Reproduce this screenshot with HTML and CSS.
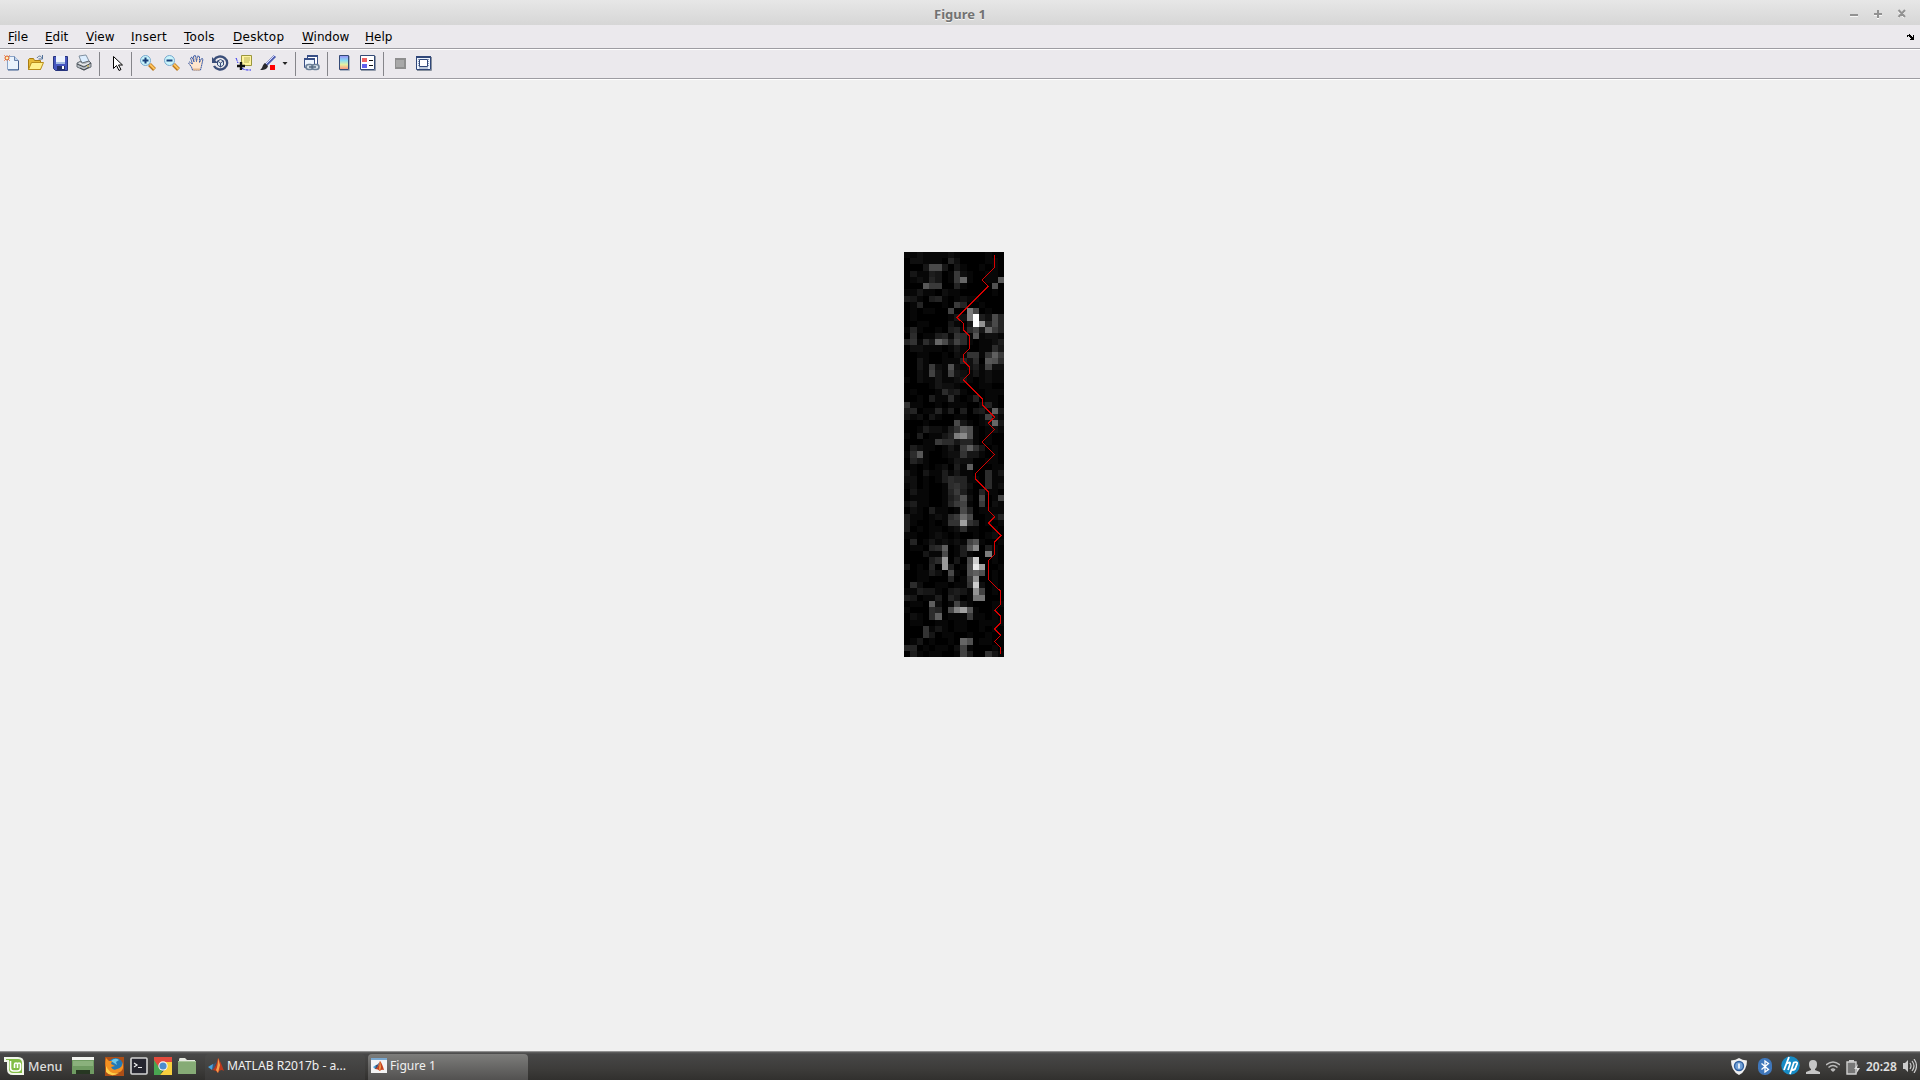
FILE: index.html
```html
<!DOCTYPE html>
<html lang="en">
<head>
<meta charset="utf-8">
<title>Figure 1</title>
<link rel="stylesheet" href="styles.css">
</head>
<body>
<div class="screen">
  <header class="titlebar">
    <span class="title">Figure 1</span>
    <svg class="window-buttons" width="60" height="16" viewBox="0 0 60 16">
      <g stroke="#fff" stroke-width="2" fill="none"><path d="M4 10.800h8M28 9.800h8M32 6v8M52.500 6l6 6.600M58.500 6l-6 6.600"/></g>
      <g stroke="#929292" stroke-width="2" fill="none"><path d="M4 10h8M28 9h8M32 5v8M52.500 5l6.500 7M59 5l-6.500 7"/></g>
    </svg>
  </header>
  <nav class="menubar">
    <span class="item"><u>F</u>ile</span>
    <span class="item"><u>E</u>dit</span>
    <span class="item"><u>V</u>iew</span>
    <span class="item wide"><u>I</u>nsert</span>
    <span class="item wide"><u>T</u>ools</span>
    <span class="item wide"><u>D</u>esktop</span>
    <span class="item"><u>W</u>indow</span>
    <span class="item"><u>H</u>elp</span>
    <svg class="dock" width="8" height="7" viewBox="0 0 8 7" shape-rendering="crispEdges"><path d="M0 1h2v-1h1v1h1v1h1v1h1V1h1v5H3V5h1V4H3V3H2V2H1v1H0z"/></svg>
  </nav>
  <div class="toolbar">
    <svg class="icon" viewBox="0 0 16 16"><path d="M3.500 1.500h7l4 4v9h-11z" fill="#e9f2fc" stroke="#8aa3c8"/><path d="M10.500 1.500v4h4" fill="#bdd3ed" stroke="#6980a8"/><path d="M14.500 6v9H4" fill="none" stroke="#3d5c8d"/><path d="M0 0l6 6M6 0L0 6" stroke="#ee986f"/><circle cx="3" cy="3" r="2" fill="#fff0b0" stroke="#dc5728"/></svg>
    <svg class="icon" viewBox="0 0 16 16"><path d="M.5 14.500v-10l1-1h4l1 2h6v9z" fill="#e6b936" stroke="#a97c12"/><path d="M.5 14.500l3-7h12l-3 7z" fill="#fff08c" stroke="#b98d1b"/><path d="M9 3c2-3 4-2 5 0M14.500 0v4h-4" fill="none" stroke="#527199"/></svg>
    <svg class="icon" viewBox="0 0 16 16"><path d="M1.500 1.500h14v14h-12l-2-2z" fill="#4656bf" stroke="#26347d"/><path d="M4 1h9v7H4z" fill="#edf2fc"/><path d="M4 7h9v2H4z" fill="#a5bde4"/><path d="M5 11h8v4H5z" fill="#24306c"/><path d="M10 11h2v3h-2z" fill="#fff"/></svg>
    <svg class="icon" viewBox="0 0 16 16"><path d="M3 1l7-1 3 6-7 3z" fill="#dceeff" stroke="#81909f"/><path d="M1 8l4-2 1 2 7-2 2 2v4l-7 3-7-3z" fill="#b8bec4" stroke="#646d75"/><path d="M1 9l7 3 7-4M4 13l4 2 5-3" fill="none" stroke="#454b51"/><path d="M3 8l5 2 5-2" stroke="#f5f5f5" fill="none"/><path d="M11 11h2" stroke="#d9b92e"/></svg>
    <i class="sep"></i>
    <svg class="icon" viewBox="0 0 16 16"><path d="M5.500 1.500v12l3-3 2.500 5 2-1-2.500-4.500h4z" fill="#fff" stroke="#000"/></svg>
    <i class="sep"></i>
    <svg class="icon" viewBox="0 0 16 16"><path d="M9.500 9.500l5 5" stroke="#b87519" stroke-width="4"/><path d="M10 9.500l4.500 4.500" stroke="#ffc45d" stroke-width="2"/><circle cx="5.500" cy="5.500" r="5" fill="#c9f4fb" stroke="#78a9cf"/><path d="M2.500 5.500h6M5.500 2.500v6" stroke="#173e7a" stroke-width="2"/></svg>
    <svg class="icon" viewBox="0 0 16 16"><path d="M9.500 9.500l5 5" stroke="#b87519" stroke-width="4"/><path d="M10 9.500l4.500 4.500" stroke="#ffc45d" stroke-width="2"/><circle cx="5.500" cy="5.500" r="5" fill="#c9f4fb" stroke="#78a9cf"/><path d="M2.500 5.500h6" stroke="#173e7a" stroke-width="2"/></svg>
    <svg class="icon" viewBox="0 0 16 16"><path d="M4.500 15l-1-3-3-4 1-1 3 2-2-6 1.500-1 2 5-.500-6 2-.500 1 6 1-5.500 2 .500v6l2-4 1.500.500-1.500 7-1 4z" fill="#ffe6cd" stroke="#3458a8" stroke-dasharray="1.800 .4"/><path d="M5 14.500h7" stroke="#e3b78d" stroke-width="2"/></svg>
    <svg class="icon" viewBox="0 0 16 16"><path d="M2 5a7 6.500 0 1 1 0 6" fill="none" stroke="#3a4e79" stroke-width="2.300"/><path d="M0 2v6h6z" fill="#3a4e79"/><path d="M5.500 6l3-1.500 3 1.500v4l-3 2-3-2zM5.500 6l3 2 3-2M8.500 8v4" fill="#dcecf4" stroke="#3a4e79"/></svg>
    <svg class="icon" viewBox="0 0 16 16"><path d="M5.500.5h10v10h-10z" fill="#fff49f" stroke="#9a963e"/><path d="M8 3h6M8 5h6M8 7h5" stroke="#b9b25a"/><path d="M0 3c1 2 1 3 2 5M6 13c2 2 4 2 9 2" fill="none" stroke="#2020ef" stroke-dasharray="3 1"/><path d="M1 11h8M5 7v8" stroke="#111" stroke-width="2.400"/></svg>
    <svg class="icon" viewBox="0 0 16 16"><path d="M15 1L6 10" stroke="#4f5fae" stroke-width="3"/><path d="M15 0L6 9" stroke="#d8dcff"/><path d="M5 8l3 3c-1 4-5 4-8 4 3-2 2-5 5-7z" fill="#29292d"/><path d="M10 10h5v5h-5z" fill="#f00"/></svg>
    <svg class="arrow" viewBox="0 0 12 16"><path d="M3.500 7h5L6 10z" fill="#222"/></svg>
    <i class="sep"></i>
    <svg class="icon" viewBox="0 0 16 16"><path d="M3.500.5h10v9h-10z" fill="#fff" stroke="#384f86"/><path d="M3 1h11" stroke="#384f86" stroke-width="2"/><path d="M.5 3.500h10v9H.5z" fill="#edf5ff" stroke="#384f86"/><path d="M0 4h11" stroke="#384f86" stroke-width="2"/><g fill="#d5e0ea" stroke="#6b8098" stroke-width="1.600"><rect x="2" y="9.500" width="7" height="5" rx="2.500"/><rect x="8" y="9.500" width="7" height="5" rx="2.500"/></g><path d="M5 12h7" stroke="#52677f" stroke-width="1.500"/></svg>
    <i class="sep"></i>
    <svg class="icon" viewBox="0 0 16 16"><defs><linearGradient id="cb" x2="0" y2="1"><stop stop-color="#9a8cf5"/><stop offset=".35" stop-color="#89dcf5"/><stop offset=".65" stop-color="#e5efa0"/><stop offset="1" stop-color="#ff8c7b"/></linearGradient></defs><path d="M3.500.5h9v14h-9z" fill="url(#cb)" stroke="#344a76"/><path d="M13.500 1v14.500H4" fill="none" stroke="#aab3c3"/></svg>
    <svg class="icon" viewBox="0 0 16 16"><path d="M.5.5h14v14H.5z" fill="#fff" stroke="#344a76"/><path d="M15.500 1v14.500H1" fill="none" stroke="#929baa"/><path d="M2 3h5v4H2z" fill="#ef6262"/><path d="M2 9h5v4H2z" fill="#6262ed"/><path d="M9 5.500h4M9 10.500h4" stroke="#111"/></svg>
    <i class="sep"></i>
    <svg class="icon" viewBox="0 0 16 16"><path d="M3 3h11v11H3z" fill="#8e8e8e"/><path d="M4 5h8v7H4z" fill="#a8a8a8"/></svg>
    <svg class="icon" viewBox="0 0 16 16"><path d="M.5 1.500h14v13H.5z" fill="#eef5ff" stroke="#304779"/><path d="M0 2h15" stroke="#304779" stroke-width="2"/><path d="M3.500 4.500h8v7h-8z" fill="#fff" stroke="#304779"/><path d="M2 4.500h1M2 6.500h1M2 8.500h1M2 10.500h1M12 4.500h1M12 6.500h1M12 8.500h1M12 10.500h1M3 13h9" stroke="#8c9db5"/><path d="M15.500 2v13.500H1" fill="none" stroke="#87909d"/></svg>
  </div>
  <main class="canvas">
    <svg class="plot" width="100" height="405" viewBox="0 0 100 405" shape-rendering="crispEdges">
      <rect width="100" height="405" fill="#000"/>
      <g id="cells"></g>
      <polyline id="seam" fill="none" stroke="#d80000" stroke-width="1"/>
    </svg>
  </main>
  <footer class="taskbar">
    <svg class="mint" width="20" height="20" viewBox="0 0 20 20"><path d="M0 1h14q6 0 6 6v12H9q-6 0-6-6V6H0z" fill="#f1f6ea"/><path d="M2 3h12q4 0 4 4v10H9q-4 0-4-4V4H2z" fill="#82bd45"/><path d="M6.500 5v7q0 3 3 3h4q3 0 3-3V8.500q0-1.500-1.500-1.500T13.500 8.500V12M13.500 8.500Q13.500 7 12 7t-1.500 1.500V12" fill="none" stroke="#fff" stroke-width="1.600"/></svg>
    <span class="menu">Menu</span>
    <svg class="show" width="22" height="18" viewBox="0 0 22 18"><path d="M0 0h22v17H0z" fill="#6f9b62"/><path d="M0 0h22v3H0z" fill="#f1f3ef"/><path d="M1 4h20v5H1z" fill="#8ab17c"/><path d="M4 13h14v4H4z" fill="#273722"/></svg>
    <svg class="fox" width="19" height="19" viewBox="0 0 19 19"><path d="M0 0h19v19H0z" fill="#ad4f17"/><circle cx="10.500" cy="8.500" r="7.500" fill="#2479b5"/><path d="M6 4q4-4 8-1l-3 2 1 3z" fill="#70c8e6"/><path d="M1 1l3 3 3 0-1 3 4 2-4 1q2 4 6 2 6-1 5-7 3 7-2 10-7 4-12-1-4-4-2-13z" fill="#f49122"/><path d="M1 9q4 9 13 7-8 5-13-1z" fill="#ffd14a"/></svg>
    <svg class="term" width="18" height="18" viewBox="0 0 18 18"><rect x="1" y="1" width="16" height="16" rx="1" fill="#25252f" stroke="#d4d4d4" stroke-width="1.600"/><path d="M4 6l3 2-3 2M8 10.500h4" fill="none" stroke="#eee" stroke-width="1.200"/></svg>
    <svg class="chrome" width="18" height="18" viewBox="0 0 18 18"><path d="M0 0h18v6H9L5 12 0 4z" fill="#e34b3d"/><path d="M0 3l6 9 3 1-3 5H0z" fill="#49a651"/><path d="M18 5v13H6l6-7-1-6z" fill="#f8cf3e"/><circle cx="9" cy="9" r="4.700" fill="#f4f4f4"/><circle cx="9" cy="9" r="3.600" fill="#4b8cce"/></svg>
    <svg class="folder" width="18" height="17" viewBox="0 0 18 17"><path d="M1 2q0-2 1-2h5l2 2h8v3H1z" fill="#e4e8df"/><path d="M0 3h18v13H0z" fill="#86ab76"/><path d="M0 3h18v1H0z" fill="#a7c499"/></svg>
    <div class="task">
      <svg width="16" height="16" viewBox="0 0 16 16"><path d="M0 9l5-3 2 2-3 4z" fill="#4aa2dc"/><path d="M5 6q3 0 5-6L6 11l-2 1z" fill="#3b5577"/><path d="M4 12q4-2 6-12 2 2 6 13-4-3-6 2-2-3-6-3z" fill="#bd381c"/><path d="M10 0q1 3 2 7l-2 8-2-3q2-4 2-12z" fill="#f4a04d"/></svg>
      <span>MATLAB R2017b - a...</span>
    </div>
    <div class="task active">
      <svg width="16" height="16" viewBox="0 0 16 16"><path d="M0 0h16v15H0z" fill="#f4f4f4"/><path d="M0 0h16v2H0z" fill="#79a7cf"/><path d="M2 9l3-2 1 1-2 3z" fill="#4aa2dc"/><path d="M5 7q2 0 4-4L6 11l-2 0z" fill="#3b5577"/><path d="M4 11q3-1 5-8 2 2 4 9-3-1-4 1-2-2-5-2z" fill="#c9431e"/><path d="M9 3l1 6-1 4-1-2z" fill="#f4a04d"/></svg>
      <span>Figure 1</span>
    </div>
    <div class="tray">
      <svg class="shield" width="16" height="17" viewBox="0 0 16 17"><path d="M8 0q3 2 8 2.500Q16 13 8 17 0 13 0 2.500 5 2 8 0z" fill="#eee"/><circle cx="8" cy="8" r="4.500" fill="#6f9fd6" stroke="#2f5f9f" stroke-width="1.400"/><path d="M8 5.500v5" stroke="#fff" stroke-width="1.600"/></svg>
      <svg class="bt" width="14" height="17" viewBox="0 0 14 17"><rect width="14" height="17" rx="6.500" fill="#3f77bb"/><path d="M3.500 5.500l7 6L7 14V3l3.500 2.500-7 6" fill="none" stroke="#fff" stroke-width="1.300"/></svg>
      <svg class="hp" width="19" height="19" viewBox="0 0 19 19"><circle cx="9.500" cy="9.500" r="9.200" fill="#168bc5"/><path d="M8 1L3 14M5 8q5-3 4 0l-2 6M13 6L9 18M12 7q5-2 4 1l-2 5q-1 1-3 1" fill="none" stroke="#fff" stroke-width="1.800"/></svg>
      <svg class="user" width="14" height="15" viewBox="0 0 14 15"><path d="M3 4q0-4 4-4t4 4q0 4-2 5v1l5 2v2H0v-2l5-2V9Q3 8 3 4z" fill="#c6c6c6"/></svg>
      <svg class="wifi" width="14" height="12" viewBox="0 0 14 12"><path d="M0 4q7-6 14 0M2.500 6.500q4.500-4 9 0M5 9q2-2 4 0" fill="none" stroke="#bbb" stroke-width="1.500"/><path d="M5 9h4l-2 2z" fill="#bbb"/></svg>
      <svg class="battery" width="14" height="15" viewBox="0 0 14 15"><path d="M1 2h9v12H1z" fill="#777" stroke="#d0d0d0" stroke-width="1.400"/><path d="M3 0h5v2H3z" fill="#ccc"/><path d="M12 4L8 9h3l-1 5 4-6h-3z" fill="#ddd"/></svg>
      <span class="clock">20:28</span>
      <svg class="sound" width="14" height="14" viewBox="0 0 14 14"><path d="M0 4h2l3-3v12L2 10H0z" fill="#ccc"/><path d="M7 4q2 3 0 6M9 2q4 5 0 10M11 0q5 7 0 14" fill="none" stroke="#ccc" stroke-width="1.200"/></svg>
    </div>
  </footer>
</div>
<script src="plot.js"></script>
</body>
</html>
```
FILE: styles.css
```css
* { box-sizing: border-box; }
body { margin: 0; overflow: hidden; background: #f0f0f0; }
.screen { display: flex; flex-direction: column; width: 1920px; height: 1080px; font-family: "Noto Sans", sans-serif; }
svg { display: block; flex: none; }
.titlebar { height: 25px; display: grid; grid-template-columns: 1fr auto 1fr; background: linear-gradient(#e7e7e7, #d6d6d6); }
.title { grid-column: 2; font-size: 13px; font-weight: 700; line-height: 28px; color: #727272; text-shadow: 0 1px #f5f5f5; }
.window-buttons { justify-self: end; margin: 5px 14px 0 0; }
.menubar { height: 25px; display: grid; grid-template-columns: 37px 41px 45px 53px 49px 69px 63px 1fr auto; padding: 0 5px 0 8px; border-bottom: 1px solid #fff; box-shadow: inset 0 -1px #9d9ca2; background: #ebe9ed; font: 12px/25px "DejaVu Sans", sans-serif; color: #000; }
.item { height: 24px; }
.item.wide { letter-spacing: .25px; }
.item u { text-underline-offset: 2px; text-decoration-thickness: 1px; }
.dock { margin-top: 9px; }
.toolbar { height: 30px; display: flex; align-items: flex-start; gap: 8px; padding: 5px 4px; border-bottom: 1px solid #fff; box-shadow: inset 0 -1px #9d9ca2; background: #ebe9ed; }
.icon { width: 16px; height: 16px; overflow: visible; }
.sep { width: 1px; height: 24px; margin: -3px 0 0 -1px; background: #85858a; }
.arrow { width: 12px; height: 16px; margin: 0 -3px 0 -5px; }
.canvas { flex: 1; padding: 172px 0 0 904px; background: #f0f0f0; }
.taskbar { height: 29px; display: flex; align-items: center; padding: 0 3px 0 4px; border-top: 1px solid #909090; background: linear-gradient(#626262 0, #474747 2px, #3d3c3a 60%, #31302e); color: #f0f0f0; font-size: 13px; }
.menu { width: 44px; padding-left: 4px; font-size: 12.5px; font-weight: 500; color: #dedede; }
.show { margin-left: 4px; }
.fox { margin-left: 11px; }
.term { margin-left: 6px; }
.chrome { margin-left: 6px; }
.folder { margin-left: 6px; }
.task { width: 160px; height: 26px; display: flex; align-items: center; align-self: flex-end; gap: 3px; margin-left: 9px; padding: 0 0 3px 3px; border-radius: 4px 4px 0 0; background: linear-gradient(#4b4b4a, #3b3a39); white-space: nowrap; font-size: 12.1px; }
.task.active { margin-left: 3px; background: linear-gradient(#7d7d7b, #525150); }
.tray { display: flex; align-items: center; margin-left: auto; }
.bt { margin-left: 11px; }
.hp { margin-left: 9px; margin-top: -2px; }
.user { margin-left: 6px; margin-top: 2px; }
.wifi { margin-left: 6px; margin-top: 2px; }
.battery { margin-left: 6px; margin-top: 2px; }
.clock { width: 36px; margin: 0 1px 0 6px; font-size: 12px; font-weight: 600; color: #e0e0e0; }
```
FILE: plot.js
```js
// One string per image row; each base-36 digit is a cell's grey level.
const rows = [
  "1121111210000100", "0221110520000110", "0003aa3031001010", "0311430182100110", "012153018e10011c",
  "000c8800510000b0", "1131102110000010", "4310451012110000", "0150001085001000", "0101100900ha0100",
  "0100000132hz42a5", "00110003103zk5a5", "1510010451693e85", "06011451761c1221", "57163ea496101124",
  "0221110131001163", "00110010217717d8", "0031001115260cb6", "0031821b21241922", "0021931932131211",
  "1021131123101211", "0000132210001100", "0100016341000111", "0010411610150110", "7110010111002510",
  "45011514040341d3", "3120310011001931", "00010000a31012e3", "001422147db10121", "10401135hjb10100",
  "0001186635510100", "0421101318d73010", "16c1001227331010", "0531000132200110", "0101012041d00011",
  "3103114131100613", "2201014655110611", "1201001675200612", "0311001584105110", "011100146b20a019",
  "2411001589108021", "021041101a501111", "411012168fa00125", "410010177m750101", "4010110126110010",
  "1100121010010120", "05013121219c1001", "011056d014cj0410", "000311a014100h10", "000046l030as0010",
  "301050l401bwm001", "0011420a10bdb010", "00110005018k0010", "06200110117s2010", "11433103431k9010",
  "43011405301gg000", "0110d20193100011", "1000650aimc10010", "02106d0111811010", "0110011011001111",
  "0007131011001010", "0007301100100100", "013010010eb01100", "5501011029100010", "0410110019400731"
];
// Column followed by the red seam, row by row.
const seam = [14,14,14,13,12,13,12,11,10,9,8,9,9,10,10,10,9,9,10,10,9,10,11,12,12,13,14,13,14,13,12,13,14,
  13,12,11,11,12,13,13,13,13,14,13,14,15,14,14,14,13,13,13,13,14,15,15,15,14,15,15,14,15,14,15,15];
const cellW = 100 / 16, cellH = 405 / 65;
let out = "";
rows.forEach((row, y) => [...row].forEach((c, x) => {
  const v = Math.round(parseInt(c, 36) * 255 / 35);
  const left = Math.round(x * cellW), top = Math.round(y * cellH);
  const w = Math.round((x + 1) * cellW) - left, h = Math.round((y + 1) * cellH) - top;
  if (v) out += `<rect x="${left}" y="${top}" width="${w}" height="${h}" fill="rgb(${v},${v},${v})"/>`;
}));
document.getElementById("cells").innerHTML = out;
document.getElementById("seam").setAttribute("points",
  seam.map((c, y) => `${(c + 0.5) * cellW},${(y + 0.5) * cellH}`).join(" "));
```
